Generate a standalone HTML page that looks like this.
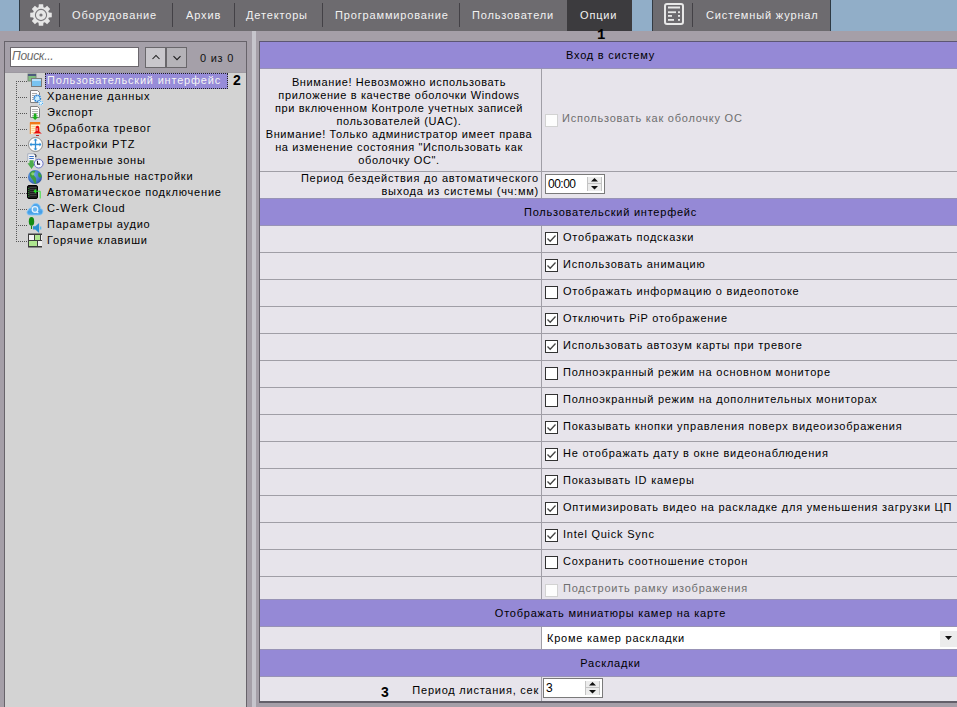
<!DOCTYPE html><html><head><meta charset="utf-8"><style>
*{margin:0;padding:0;box-sizing:border-box}
html,body{width:957px;height:707px;overflow:hidden}
body{background:#a59fa8;font-family:"Liberation Sans",sans-serif;font-size:11px;color:#000;position:relative}
.a{position:absolute}
.t{position:absolute;white-space:pre;line-height:13px;letter-spacing:0.76px}
.tab{position:absolute;white-space:pre;color:#f2f2f2;font-size:11px;letter-spacing:0.85px;line-height:13px;top:9px}
.sep{position:absolute;top:3px;width:1px;height:24px;background:#434146}
.hdr{position:absolute;left:260px;width:701px;background:#9589d6;box-shadow:inset 0 1px #8f88b9,inset 0 -1px #8f88b9;text-align:center;line-height:13px;letter-spacing:0.7px}
.row{position:absolute;left:260px;width:697px;background:#e7e4eb;border-top:1px solid #a09ea6}
.vd{position:absolute;left:281px;top:0;bottom:0;width:1px;background:#a09ea6}
.cb{position:absolute;width:13px;height:13px;border:1px solid #333;background:#fff}
.cbd{position:absolute;width:13px;height:13px;border:1px solid #d2d2d2;background:#fdfdfd}
.ti{position:absolute;left:47px;white-space:pre;line-height:13px;letter-spacing:0.8px}
.lbl{position:absolute;font-weight:bold;font-size:14px;line-height:14px}
</style></head><body>
<div class="a" style="left:0;top:0;width:957px;height:31px;background:#91aec8"></div>
<div class="a" style="left:19px;top:0;width:613px;height:31px;background:#6d6b6f;border-left:1px solid #2e3a44"></div>
<div class="a" style="left:567px;top:0;width:65px;height:31px;background:#3c3b3e"></div>
<div class="a" style="left:652px;top:0;width:179px;height:31px;background:#6d6b6f;border-left:1px solid #333a42;border-right:1px solid #2e3a44"></div>
<svg class="a" style="left:29px;top:3px" width="24" height="24" viewBox="-12 -12 24 24"><path d="M-2.42 -7.83 L-2.19 -10.78 L2.19 -10.78 L2.42 -7.83 L3.83 -7.25 L6.08 -9.17 L9.17 -6.08 L7.25 -3.83 L7.83 -2.42 L10.78 -2.19 L10.78 2.19 L7.83 2.42 L7.25 3.83 L9.17 6.08 L6.08 9.17 L3.83 7.25 L2.42 7.83 L2.19 10.78 L-2.19 10.78 L-2.42 7.83 L-3.83 7.25 L-6.08 9.17 L-9.17 6.08 L-7.25 3.83 L-7.83 2.42 L-10.78 2.19 L-10.78 -2.19 L-7.83 -2.42 L-7.25 -3.83 L-9.17 -6.08 L-6.08 -9.17 L-3.83 -7.25Z" fill="#e6e6e6"/><circle cx="0" cy="0" r="5.6" fill="none" stroke="#7a787c" stroke-width="1.1"/><circle cx="0" cy="0" r="1.6" fill="#7a787c"/></svg>
<div class="sep" style="left:59px"></div>
<div class="sep" style="left:172px"></div>
<div class="sep" style="left:234px"></div>
<div class="sep" style="left:322px"></div>
<div class="sep" style="left:459px"></div>
<div class="sep" style="left:692px"></div>
<div class="tab" style="left:72px">Оборудование</div>
<div class="tab" style="left:186px">Архив</div>
<div class="tab" style="left:246px">Детекторы</div>
<div class="tab" style="left:335px">Программирование</div>
<div class="tab" style="left:472px">Пользователи</div>
<div class="tab" style="left:580px">Опции</div>
<div class="tab" style="left:706px">Системный журнал</div>
<svg class="a" style="left:664px;top:3px" width="21" height="23" viewBox="0 0 21 23"><rect x="1" y="1" width="18" height="20" rx="2" fill="none" stroke="#e8e8e8" stroke-width="2"/><rect x="4" y="3.5" width="12" height="2" fill="#e8e8e8"/><rect x="4" y="8.3" width="8" height="1.8" fill="#e8e8e8"/><rect x="14" y="8.3" width="2" height="1.8" fill="#e8e8e8"/><rect x="4" y="12" width="4" height="1.8" fill="#e8e8e8"/><rect x="14" y="12" width="2" height="1.8" fill="#e8e8e8"/><rect x="4" y="16" width="6" height="1.8" fill="#e8e8e8"/><rect x="14" y="16" width="2" height="1.8" fill="#e8e8e8"/></svg>
<div class="lbl" style="left:597px;top:28px;font-family:'Liberation Mono',monospace">1</div>
<div class="a" style="left:4px;top:41px;width:243px;height:700px;border:1px solid #67636a;background:#a5a0a9"></div>
<div class="a" style="left:10px;top:47px;width:129px;height:20px;border:1px solid #6b676d;background:#fff"></div>
<div class="t" style="left:12px;top:50px;font-size:12px;font-style:italic;color:#6a6a6a;letter-spacing:-0.3px">Поиск...</div>
<div class="a" style="left:145px;top:47px;width:21px;height:21px;border:1px solid #69676b;background:#c9c7cc"></div>
<div class="a" style="left:166px;top:47px;width:21px;height:21px;border:1px solid #69676b;background:#b5b3b8"></div>
<svg class="a" style="left:151px;top:54px" width="10" height="7"><path d="M1.5 5 L5 1.5 L8.5 5" fill="none" stroke="#1a1a1a" stroke-width="1.05"/></svg>
<svg class="a" style="left:172px;top:55px" width="10" height="7"><path d="M1.5 1.2 L5 4.7 L8.5 1.2" fill="none" stroke="#1a1a1a" stroke-width="1.05"/></svg>
<div class="t" style="left:200px;top:52px;color:#111">0 из 0</div>
<div class="a" style="left:5px;top:72px;width:241px;height:640px;background:#d3d3d3;border-top:1px solid #9d99a1"></div>
<div class="a" style="left:16px;top:81px;width:1px;height:161px;background:repeating-linear-gradient(#555 0 1px,transparent 1px 2px)"></div>
<div class="a" style="left:18px;top:81px;width:9px;height:1px;background:repeating-linear-gradient(90deg,#555 0 1px,transparent 1px 2px)"></div>
<div class="a" style="left:45px;top:73px;width:183px;height:16px;background:#978cd8;border:1px dotted #222"></div>
<div class="ti" style="top:74px;color:#f4f4f4">Пользовательский интерфейс</div>
<div class="a" style="left:18px;top:97px;width:9px;height:1px;background:repeating-linear-gradient(90deg,#555 0 1px,transparent 1px 2px)"></div>
<div class="ti" style="top:90px">Хранение данных</div>
<div class="a" style="left:18px;top:113px;width:9px;height:1px;background:repeating-linear-gradient(90deg,#555 0 1px,transparent 1px 2px)"></div>
<div class="ti" style="top:106px">Экспорт</div>
<div class="a" style="left:18px;top:129px;width:9px;height:1px;background:repeating-linear-gradient(90deg,#555 0 1px,transparent 1px 2px)"></div>
<div class="ti" style="top:122px">Обработка тревог</div>
<div class="a" style="left:18px;top:145px;width:9px;height:1px;background:repeating-linear-gradient(90deg,#555 0 1px,transparent 1px 2px)"></div>
<div class="ti" style="top:138px">Настройки PTZ</div>
<div class="a" style="left:18px;top:161px;width:9px;height:1px;background:repeating-linear-gradient(90deg,#555 0 1px,transparent 1px 2px)"></div>
<div class="ti" style="top:154px">Временные зоны</div>
<div class="a" style="left:18px;top:177px;width:9px;height:1px;background:repeating-linear-gradient(90deg,#555 0 1px,transparent 1px 2px)"></div>
<div class="ti" style="top:170px">Региональные настройки</div>
<div class="a" style="left:18px;top:193px;width:9px;height:1px;background:repeating-linear-gradient(90deg,#555 0 1px,transparent 1px 2px)"></div>
<div class="ti" style="top:186px">Автоматическое подключение</div>
<div class="a" style="left:18px;top:209px;width:9px;height:1px;background:repeating-linear-gradient(90deg,#555 0 1px,transparent 1px 2px)"></div>
<div class="ti" style="top:202px">C-Werk Cloud</div>
<div class="a" style="left:18px;top:225px;width:9px;height:1px;background:repeating-linear-gradient(90deg,#555 0 1px,transparent 1px 2px)"></div>
<div class="ti" style="top:218px">Параметры аудио</div>
<div class="a" style="left:18px;top:241px;width:9px;height:1px;background:repeating-linear-gradient(90deg,#555 0 1px,transparent 1px 2px)"></div>
<div class="ti" style="top:234px">Горячие клавиши</div>
<div class="lbl" style="left:233px;top:73px">2</div>
<svg class="a" style="left:24px;top:70px" width="24" height="182" viewBox="24 70 24 182">
<!-- 1 UI windows -->
<rect x="28" y="74" width="8" height="7" fill="#7fbf7f" stroke="#7a8a7a" stroke-width="1"/>
<rect x="28" y="74" width="8" height="2" fill="#4d5a7c"/>
<rect x="31.5" y="78.5" width="10" height="8" fill="#79c3f0" stroke="#7c7c7c" stroke-width="1"/>
<rect x="32" y="79" width="9" height="2" fill="#b8e0fa"/>
<!-- 2 storage doc + gear -->
<path d="M30.5 90.5 H37.5 L39.5 92.5 V102.5 H30.5Z" fill="#fbfbfb" stroke="#808080"/>
<path d="M32 93.5h5M32 95.5h4M32 97.5h2M32 99.5h2" stroke="#a8a8a8"/>
<circle cx="37.3" cy="98.4" r="3.6" fill="#d8f4ff"/>
<circle cx="37.3" cy="98.4" r="3" fill="none" stroke="#1f78d0" stroke-width="1.7" stroke-dasharray="1.3 0.7"/>
<circle cx="37.3" cy="98.4" r="1.5" fill="#c8f0ff"/>
<circle cx="40.8" cy="103" r="2.5" fill="#e6f7ff"/>
<circle cx="40.8" cy="103" r="1.8" fill="none" stroke="#4aa6ea" stroke-width="1.1" stroke-dasharray="1 0.7"/>
<!-- 3 export doc + green arrow -->
<path d="M30.5 106.5 H37.5 L39.5 108.5 V117.5 H30.5Z" fill="#fbfbfb" stroke="#808080"/>
<path d="M32 109.5h6M32 111.5h6M32 113.5h6M32 115.5h6" stroke="#b4b4b4"/>
<path d="M33.8 113.5 h2.6 v3.2 h2 l-3.3 3.4 l-3.3 -3.4 h2z" fill="#1cae1c"/>
<!-- 4 alarm -->
<path d="M30.3 134 V122.5 H40" fill="none" stroke="#f08a2a" stroke-width="1"/>
<rect x="31" y="123" width="9" height="11" fill="#fff2cc"/>
<rect x="30" y="122" width="10.2" height="2.4" fill="#f07818"/>
<path d="M31.5 126.5h5M31.5 128.5h4M31.5 130.5h3M31.5 132.5h3" stroke="#f8d090"/>
<path d="M37.5 125.8 c-1.3 0 -1.9 1.2 -1.9 3 v2.2 c0 1 -1.4 1.8 -2.6 2.6 h9 c-1.2 -0.8 -2.6 -1.6 -2.6 -2.6 v-2.2 c0 -1.8 -0.6 -3 -1.9 -3z" fill="#e60c0c"/>
<rect x="36.5" y="128" width="1.2" height="3" fill="#fff" opacity="0.6"/>
<rect x="36" y="135" width="3" height="1" fill="#b22"/>
<!-- 5 PTZ -->
<circle cx="35.5" cy="144.5" r="7" fill="#fff" stroke="#8a8a8a" stroke-width="1"/>
<path d="M35.5 139.5v10M30.5 144.5h10" stroke="#2f8fd6" stroke-width="1.3"/>
<path d="M35.5 138.5l-2 2h4zM35.5 150.5l-2-2h4zM29.5 144.5l2-2v4zM41.5 144.5l-2-2v4z" fill="#2f8fd6"/>
<!-- 6 time zones -->
<path d="M27.8 161 V153.8 H34.3 L35.8 155.3 V160" fill="#f6f8fc" stroke="#a0a8b8" stroke-width="0.9"/>
<path d="M29.3 156.5h4.5M29.3 158.5h4.5" stroke="#3a70c8" stroke-width="1"/>
<path d="M34.5 153.8 l1.3 1.5 v1.8" stroke="#1a1a2a" stroke-width="1" fill="none"/>
<path d="M29.5 160.3 h4 v3 h2 l-4 5.6 l-4 -5.6 h2z" fill="#4cac4c"/>
<circle cx="38.7" cy="163.6" r="4.4" fill="#f4f5ff" stroke="#6a72c8" stroke-width="1"/>
<path d="M37.5 160.8v3.3h2.6" stroke="#1a1a2a" fill="none" stroke-width="1.1"/>
<!-- 7 globe -->
<defs><radialGradient id="gg" cx="0.4" cy="0.35" r="0.7"><stop offset="0" stop-color="#6aa8ea"/><stop offset="0.7" stop-color="#3f74c6"/><stop offset="1" stop-color="#2c4f96"/></radialGradient></defs>
<circle cx="35" cy="177" r="7" fill="url(#gg)"/>
<path d="M30.5 172.2 c1.5 -1.4 3.8 -1.8 5 -1 c-0.6 1.4 -2.2 1.6 -2 3 c0.3 2 2.4 2.6 2.6 4.6 c0.2 2 -0.4 4 0.4 5 c-1.6 0.3 -2.4 -1.2 -3 -2.6 c-0.6 -1.6 -2.4 -2.8 -3.2 -4.6 c-0.6 -1.6 -0.6 -3.2 0.2 -4.4z" fill="#3f9d3f"/>
<path d="M38.5 172.5 c1.6 0.6 2.8 2 3.2 3.8 c-0.4 1.4 -1.6 1.6 -2.6 1 c-1 -0.8 -1.2 -2.6 -0.6 -4.8z" fill="#3aa03a"/>
<circle cx="32.8" cy="173.8" r="1.6" fill="#9be07a" opacity="0.8"/>
<!-- 8 auto connect -->
<rect x="27.5" y="185.5" width="10" height="13" rx="1.5" fill="#1c1c1c" stroke="#000"/>
<path d="M29.5 187.5h7M29.5 189.5h7M29.5 191.5h7M29.5 193.5h7M29.5 195.5h7" stroke="#4a4a4a" stroke-width="0.8"/>
<path d="M28.8 188v9" stroke="#2ea02e" stroke-dasharray="1 1"/>
<path d="M35 191.2 h5.2 v7.3" fill="none" stroke="#3de03d" stroke-width="1"/>
<path d="M33.3 191.2 l2.8 -2.4 v4.8z" fill="#22e022"/>
<!-- 9 cloud -->
<path d="M29.5 215 c-2.6 0 -3.6 -3.6 -1.2 -4.8 c0.2 -1.6 1.6 -2.4 2.8 -2 c0.6 -3.6 3.4 -5.6 6.4 -4.4 c2 0.8 3 2.6 3 4.8 c2 0.2 3 2.2 2.2 4 c-0.4 1.6 -1.6 2.4 -3 2.4z" fill="#4fa6ec" stroke="#8ccaf6" stroke-width="0.8"/>
<path d="M28 212 h14" stroke="#2f86d2" stroke-width="1" opacity="0.4"/>
<circle cx="35" cy="209.5" r="2.8" fill="#6bb6ee" stroke="#e6f4ff" stroke-width="1.2"/>
<path d="M36.2 211.8l2.2 1.2" stroke="#e6f4ff" stroke-width="1.2"/>
<!-- 10 audio -->
<ellipse cx="31.5" cy="221.4" rx="2.7" ry="4.4" fill="#138a13"/>
<path d="M31.5 226v3" stroke="#138a13" stroke-width="1.1"/>
<path d="M33 226.3 h2.3 l3.8 -3.4 v10 l-3.8 -3.4 h-2.3z" fill="#2a8fd0"/>
<path d="M40.6 226.5 v3" stroke="#5cbcf0" stroke-width="1.4"/>
<!-- 11 hotkeys -->
<rect x="28" y="233.5" width="14" height="14" fill="#3c3c3c"/>
<rect x="29" y="235" width="5" height="5" fill="#f2f2f2"/>
<rect x="35" y="235" width="5" height="5" fill="#aee58f"/>
<rect x="29" y="241" width="8" height="5" fill="#aee58f"/>
<rect x="38" y="241" width="4" height="5" fill="#eeeeee"/>
<rect x="41" y="235" width="1" height="5" fill="#eee"/>
</svg>
<div class="a" style="left:252px;top:31px;width:4px;height:676px;background:#c6c5cc"></div>
<div class="a" style="left:259px;top:41px;width:698px;height:662px;border:1px solid #635f69;border-top-color:#5c5672;border-right:none;border-bottom:2px solid #635f69;background:#e7e4eb"></div>
<div class="a" style="left:260px;top:42px;width:697px;height:26px;background:#9589d6"></div>
<div class="t" style="left:260px;top:49px;width:701px;text-align:center">Вход в систему</div>
<div class="a" style="left:260px;top:68px;width:697px;height:1px;background:#9893b6"></div>
<div class="a" style="left:541px;top:69px;width:1px;height:129px;background:#a09ea6"></div>
<div class="t" style="left:260px;top:76px;width:278px;text-align:center;letter-spacing:0.62px">Внимание! Невозможно использовать
приложение в качестве оболочки Windows
при включенном Контроле учетных записей
пользователей (UAC).
Внимание! Только администратор имеет права
на изменение состояния "Использовать как
оболочку ОС".</div>
<div class="cbd" style="left:545px;top:114px"></div>
<div class="t" style="left:562px;top:112px;color:#6e6e6e">Использовать как оболочку ОС</div>
<div class="a" style="left:260px;top:171px;width:697px;height:1px;background:#a09ea6"></div>
<div class="t" style="left:260px;top:172px;width:279px;text-align:right">Период бездействия до автоматического
выхода из системы (чч:мм)</div>
<div class="a" style="left:545px;top:174px;width:60px;height:20px;border:1px solid #7a7a7a;background:#fff"></div>
<div class="t" style="left:548px;top:178px;font-size:12px;letter-spacing:-0.5px">00:00</div>
<div class="a" style="left:587px;top:177px;width:15px;height:14px;background:#ececec;border-left:1px solid #c4c4c4;border-right:1px solid #c4c4c4"></div>
<div class="a" style="left:588px;top:183px;width:13px;height:1px;background:#c4c4c4"></div>
<svg class="a" style="left:590px;top:178px" width="9" height="12"><path d="M1 3.5 L4.5 0 L8 3.5Z M1 8 L4.5 11.5 L8 8Z" fill="#111"/></svg>
<div class="a" style="left:260px;top:198px;width:697px;height:1px;background:#9893b6"></div>
<div class="a" style="left:260px;top:199px;width:697px;height:26px;background:#9589d6"></div>
<div class="t" style="left:260px;top:206px;width:701px;text-align:center">Пользовательский интерфейс</div>
<div class="a" style="left:260px;top:225px;width:697px;height:1px;background:#9893b6"></div>
<div class="a" style="left:541px;top:226px;width:1px;height:373px;background:#a09ea6"></div>
<div class="cb" style="left:545px;top:232px"></div>
<svg class="a" style="left:546px;top:233px" width="11" height="11"><path d="M1.5 5.5 L4.2 8.3 L9.5 2.5" fill="none" stroke="#444" stroke-width="1.3"/></svg>
<div class="t" style="left:563px;top:231px">Отображать подсказки</div>
<div class="a" style="left:260px;top:252px;width:697px;height:1px;background:#a09ea6"></div>
<div class="cb" style="left:545px;top:259px"></div>
<svg class="a" style="left:546px;top:260px" width="11" height="11"><path d="M1.5 5.5 L4.2 8.3 L9.5 2.5" fill="none" stroke="#444" stroke-width="1.3"/></svg>
<div class="t" style="left:563px;top:258px">Использовать анимацию</div>
<div class="a" style="left:260px;top:279px;width:697px;height:1px;background:#a09ea6"></div>
<div class="cb" style="left:545px;top:286px"></div>
<div class="t" style="left:563px;top:285px">Отображать информацию о видеопотоке</div>
<div class="a" style="left:260px;top:306px;width:697px;height:1px;background:#a09ea6"></div>
<div class="cb" style="left:545px;top:313px"></div>
<svg class="a" style="left:546px;top:314px" width="11" height="11"><path d="M1.5 5.5 L4.2 8.3 L9.5 2.5" fill="none" stroke="#444" stroke-width="1.3"/></svg>
<div class="t" style="left:563px;top:312px">Отключить PiP отображение</div>
<div class="a" style="left:260px;top:333px;width:697px;height:1px;background:#a09ea6"></div>
<div class="cb" style="left:545px;top:340px"></div>
<svg class="a" style="left:546px;top:341px" width="11" height="11"><path d="M1.5 5.5 L4.2 8.3 L9.5 2.5" fill="none" stroke="#444" stroke-width="1.3"/></svg>
<div class="t" style="left:563px;top:339px">Использовать автозум карты при тревоге</div>
<div class="a" style="left:260px;top:360px;width:697px;height:1px;background:#a09ea6"></div>
<div class="cb" style="left:545px;top:367px"></div>
<div class="t" style="left:563px;top:366px">Полноэкранный режим на основном мониторе</div>
<div class="a" style="left:260px;top:387px;width:697px;height:1px;background:#a09ea6"></div>
<div class="cb" style="left:545px;top:394px"></div>
<div class="t" style="left:563px;top:393px">Полноэкранный режим на дополнительных мониторах</div>
<div class="a" style="left:260px;top:414px;width:697px;height:1px;background:#a09ea6"></div>
<div class="cb" style="left:545px;top:421px"></div>
<svg class="a" style="left:546px;top:422px" width="11" height="11"><path d="M1.5 5.5 L4.2 8.3 L9.5 2.5" fill="none" stroke="#444" stroke-width="1.3"/></svg>
<div class="t" style="left:563px;top:420px">Показывать кнопки управления поверх видеоизображения</div>
<div class="a" style="left:260px;top:441px;width:697px;height:1px;background:#a09ea6"></div>
<div class="cb" style="left:545px;top:448px"></div>
<svg class="a" style="left:546px;top:449px" width="11" height="11"><path d="M1.5 5.5 L4.2 8.3 L9.5 2.5" fill="none" stroke="#444" stroke-width="1.3"/></svg>
<div class="t" style="left:563px;top:447px">Не отображать дату в окне видеонаблюдения</div>
<div class="a" style="left:260px;top:468px;width:697px;height:1px;background:#a09ea6"></div>
<div class="cb" style="left:545px;top:475px"></div>
<svg class="a" style="left:546px;top:476px" width="11" height="11"><path d="M1.5 5.5 L4.2 8.3 L9.5 2.5" fill="none" stroke="#444" stroke-width="1.3"/></svg>
<div class="t" style="left:563px;top:474px">Показывать ID камеры</div>
<div class="a" style="left:260px;top:495px;width:697px;height:1px;background:#a09ea6"></div>
<div class="cb" style="left:545px;top:502px"></div>
<svg class="a" style="left:546px;top:503px" width="11" height="11"><path d="M1.5 5.5 L4.2 8.3 L9.5 2.5" fill="none" stroke="#444" stroke-width="1.3"/></svg>
<div class="t" style="left:563px;top:501px">Оптимизировать видео на раскладке для уменьшения загрузки ЦП</div>
<div class="a" style="left:260px;top:522px;width:697px;height:1px;background:#a09ea6"></div>
<div class="cb" style="left:545px;top:529px"></div>
<svg class="a" style="left:546px;top:530px" width="11" height="11"><path d="M1.5 5.5 L4.2 8.3 L9.5 2.5" fill="none" stroke="#444" stroke-width="1.3"/></svg>
<div class="t" style="left:563px;top:528px">Intel Quick Sync</div>
<div class="a" style="left:260px;top:549px;width:697px;height:1px;background:#a09ea6"></div>
<div class="cb" style="left:545px;top:556px"></div>
<div class="t" style="left:563px;top:555px">Сохранить соотношение сторон</div>
<div class="a" style="left:260px;top:576px;width:697px;height:1px;background:#a09ea6"></div>
<div class="cbd" style="left:545px;top:584px"></div>
<div class="t" style="left:563px;top:582px;color:#6e6e6e">Подстроить рамку изображения</div>
<div class="a" style="left:260px;top:599px;width:697px;height:1px;background:#9893b6"></div>
<div class="a" style="left:260px;top:600px;width:697px;height:26px;background:#9589d6"></div>
<div class="t" style="left:260px;top:607px;width:701px;text-align:center">Отображать миниатюры камер на карте</div>
<div class="a" style="left:260px;top:626px;width:697px;height:1px;background:#9893b6"></div>
<div class="a" style="left:541px;top:627px;width:1px;height:22px;background:#a09ea6"></div>
<div class="a" style="left:542px;top:627px;width:415px;height:22px;background:#fff"></div>
<div class="t" style="left:547px;top:632px">Кроме камер раскладки</div>
<div class="a" style="left:940px;top:631px;width:17px;height:16px;background:#ececec"></div>
<svg class="a" style="left:945px;top:636px" width="7" height="5"><path d="M0 0 L7 0 L3.5 4Z" fill="#111"/></svg>
<div class="a" style="left:260px;top:649px;width:697px;height:1px;background:#9893b6"></div>
<div class="a" style="left:260px;top:650px;width:697px;height:26px;background:#9589d6"></div>
<div class="t" style="left:260px;top:657px;width:701px;text-align:center">Раскладки</div>
<div class="a" style="left:260px;top:676px;width:697px;height:1px;background:#9893b6"></div>
<div class="a" style="left:541px;top:677px;width:1px;height:24px;background:#a09ea6"></div>
<div class="t" style="left:260px;top:684px;width:279px;text-align:right">Период листания, сек</div>
<div class="a" style="left:543px;top:678px;width:60px;height:20px;border:1px solid #7a7a7a;background:#fff"></div>
<div class="t" style="left:546px;top:682px;font-size:12px;letter-spacing:-0.5px">3</div>
<div class="a" style="left:585px;top:681px;width:15px;height:14px;background:#ececec;border-left:1px solid #c4c4c4;border-right:1px solid #c4c4c4"></div>
<div class="a" style="left:586px;top:687px;width:13px;height:1px;background:#c4c4c4"></div>
<svg class="a" style="left:588px;top:682px" width="9" height="12"><path d="M1 3.5 L4.5 0 L8 3.5Z M1 8 L4.5 11.5 L8 8Z" fill="#111"/></svg>
<div class="lbl" style="left:381px;top:685px">3</div>
</body></html>
